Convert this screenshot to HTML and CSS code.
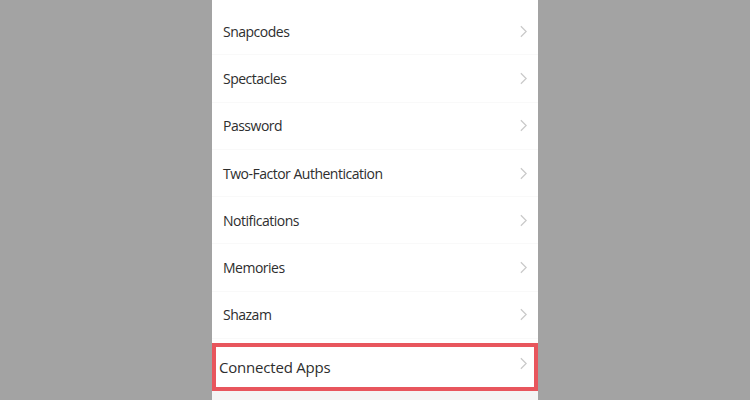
FILE: index.html
```html
<!DOCTYPE html>
<html>
<head>
<meta charset="utf-8">
<link rel="stylesheet" href="styles.css">
</head>
<body>
<div class="panel">
  <div class="row"><span class="label">Snapcodes</span><svg class="chev" viewBox="0 0 8 14"><polyline points="1,1 7,7 1,13"/></svg></div>
  <div class="row"><span class="label">Spectacles</span><svg class="chev" viewBox="0 0 8 14"><polyline points="1,1 7,7 1,13"/></svg></div>
  <div class="row"><span class="label">Password</span><svg class="chev" viewBox="0 0 8 14"><polyline points="1,1 7,7 1,13"/></svg></div>
  <div class="row"><span class="label">Two-Factor Authentication</span><svg class="chev" viewBox="0 0 8 14"><polyline points="1,1 7,7 1,13"/></svg></div>
  <div class="row"><span class="label">Notifications</span><svg class="chev" viewBox="0 0 8 14"><polyline points="1,1 7,7 1,13"/></svg></div>
  <div class="row"><span class="label">Memories</span><svg class="chev" viewBox="0 0 8 14"><polyline points="1,1 7,7 1,13"/></svg></div>
  <div class="row"><span class="label">Shazam</span><svg class="chev" viewBox="0 0 8 14"><polyline points="1,1 7,7 1,13"/></svg></div>
  <div class="row highlight"><span class="label">Connected Apps</span><svg class="chev up" viewBox="0 0 8 14"><polyline points="1,1 7,7 1,13"/></svg></div>
  <div class="tail"></div>
</div>
</body>
</html>
```
FILE: styles.css
```css
html, body {
  margin: 0;
  padding: 0;
}
body {
  background: #a3a3a3;
  width: 750px;
  height: 400px;
  overflow: hidden;
  display: flex;
  justify-content: center;
  font-family: "Open Sans", "Liberation Sans", sans-serif;
}
.panel {
  width: 326px;
  height: 400px;
  background: #ffffff;
  padding-top: 8px;
  box-sizing: border-box;
  display: flex;
  flex-direction: column;
}
.row {
  height: 47.3px;
  flex: none;
  box-sizing: border-box;
  display: flex;
  align-items: center;
  justify-content: space-between;
  padding: 0 11px 0 11px;
  border-bottom: 1px solid #f9f9f9;
}
.label {
  font-size: 14px;
  color: #2e2e2e;
  letter-spacing: -0.5px;
}
.chev {
  width: 7px;
  height: 13px;
  fill: none;
  stroke: #c9c9c9;
  stroke-width: 1.4;
}
.highlight {
  margin-top: 4px;
  height: 48px;
  border: 4px solid #e8565d;
  padding: 0 7px 0 3px;
}
.highlight .label {
  font-size: 15px;
  letter-spacing: -0.2px;
}
.highlight .up {
  margin-top: -8px;
}
.tail {
  flex: 1;
  background: #f4f4f4;
}
```
